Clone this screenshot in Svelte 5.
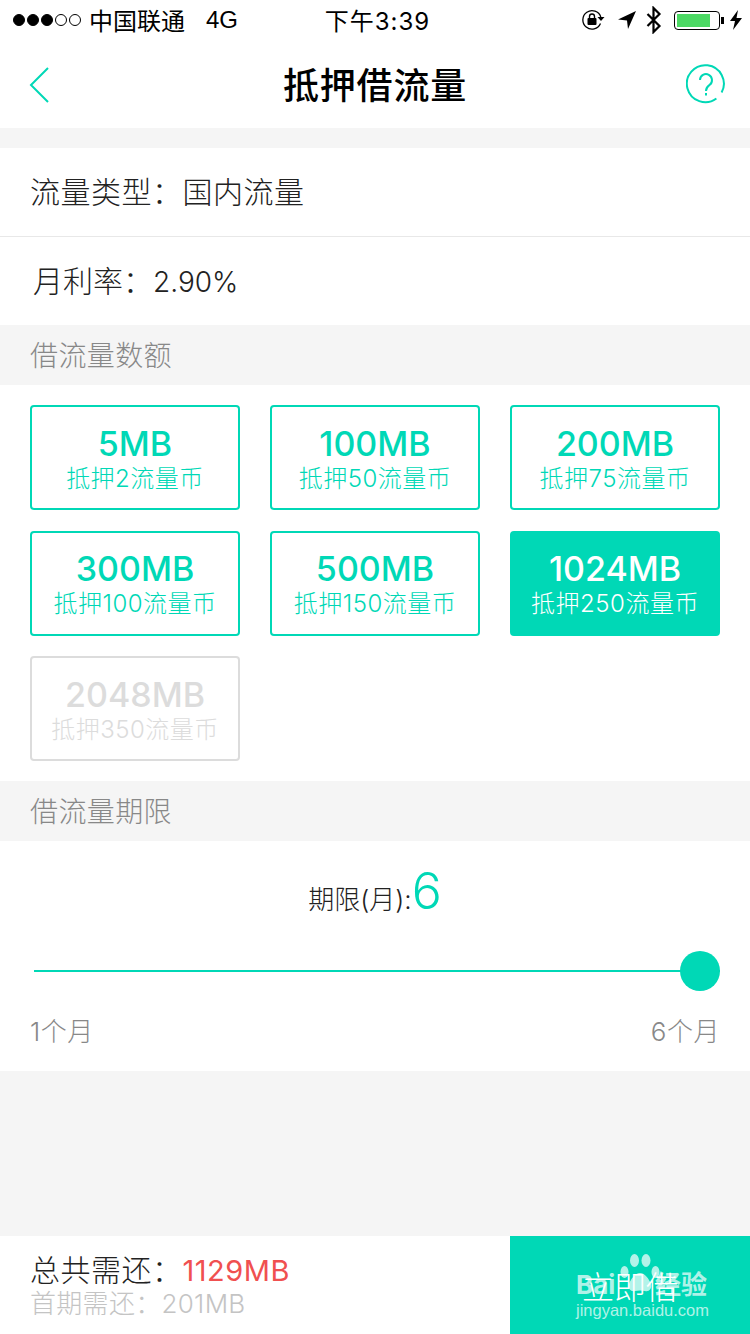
<script lang="ts">
  const options = [
    { size: '5MB', pledge: '抵押2流量币', state: '' },
    { size: '100MB', pledge: '抵押50流量币', state: '' },
    { size: '200MB', pledge: '抵押75流量币', state: '' },
    { size: '300MB', pledge: '抵押100流量币', state: '' },
    { size: '500MB', pledge: '抵押150流量币', state: '' },
    { size: '1024MB', pledge: '抵押250流量币', state: 'selected' },
    { size: '2048MB', pledge: '抵押350流量币', state: 'disabled' }
  ];
</script>

<div class="page">
  <div class="status">
    <div class="status-left">
      <span class="dots">
        <i class="on"></i><i class="on"></i><i class="on"></i><i></i><i></i>
      </span>
      <span class="carrier">中国联通</span>
      <span class="net">4G</span>
    </div>
    <div class="clock">下午3:39</div>
    <div class="status-right">
      <svg width="24" height="22" viewBox="0 0 24 22" fill="none">
        <path d="M19.500 14.500A9.200 9.200 0 1 1 19.800 8" stroke="#000" stroke-width="1.300" />
        <path d="M16.500 8h7l-3.500 4z" fill="#000" />
        <rect x="6.500" y="9" width="9" height="7" rx="1" fill="#000" />
        <path d="M8.500 9V7.500a2.500 2.500 0 0 1 5 0V9" stroke="#000" stroke-width="1.400" />
      </svg>
      <svg class="gap-arrow" width="18" height="18" viewBox="0 0 18 18">
        <path d="M18 0L0 8.500l9 1 1 8.500z" fill="#000" />
      </svg>
      <svg class="gap-bt" width="16" height="28" viewBox="0 0 16 28" fill="none">
        <path d="M1.500 8l12 12L7.500 26V2l6 6L1.500 20" stroke="#000" stroke-width="2.200" />
      </svg>
      <div class="battery"><div class="charge"></div></div>
      <div class="nub"></div>
      <svg class="gap-bolt" width="12" height="20" viewBox="0 0 12 20">
        <path d="M8 0L0 11h5l-2 9 9-12H6.500z" fill="#000" />
      </svg>
    </div>
  </div>

  <header class="nav">
    <svg class="back" width="20" height="36" viewBox="0 0 20 36" fill="none">
      <path d="M19 1L2 18l17 17" stroke="#00d8b6" stroke-width="2" />
    </svg>
    <h1>抵押借流量</h1>
    <svg class="help" width="40" height="40" viewBox="0 0 40 40" fill="none">
      <path d="M35.600 28.500A18.500 18.500 0 1 0 30.400 34.500" stroke="#00d8b6" stroke-width="2" />
      <path d="M14 16a6 6 0 1 1 9.500 5c-2 1.500-3.500 2.500-3.500 6" stroke="#00d8b6" stroke-width="2" />
      <path d="M20 29v2.500" stroke="#00d8b6" stroke-width="2" />
    </svg>
  </header>

  <div class="spacer"></div>

  <div class="row first">流量类型：国内流量</div>
  <div class="row rate-row">月利率：<span class="rate">2.90%</span></div>

  <div class="section">借流量数额</div>
  <div class="grid">
    {#each options as o}
      <div class="tile {o.state}">
        <div class="size">{o.size}</div>
        <div class="pledge">{o.pledge}</div>
      </div>
    {/each}
  </div>

  <div class="section">借流量期限</div>
  <div class="term">
    <div class="term-label">期限(月):<span class="term-value">6</span></div>
    <div class="slider">
      <div class="track"></div>
      <div class="thumb"></div>
    </div>
    <div class="ends"><span>1个月</span><span>6个月</span></div>
  </div>

  <footer class="bar">
    <div class="totals">
      <div class="total">总共需还：<span class="amount">1129MB</span></div>
      <div class="first-pay">首期需还：201MB</div>
    </div>
    <div class="submit">
      立即借
      <div class="watermark">
        <svg class="paw" width="40" height="46" viewBox="0 0 40 46" fill="#fff">
          <ellipse cx="14.500" cy="6.500" rx="4.500" ry="6.500" />
          <ellipse cx="26" cy="6.500" rx="4.500" ry="6.500" />
          <ellipse cx="4.500" cy="18" rx="4" ry="6" />
          <ellipse cx="35.500" cy="18" rx="4" ry="6" />
          <path d="M20 19c-5 0-9 6-11 11-1 5 2 8 6 7 3-.7 7-.7 10 0 4 1 7-2 6-7-2-5-6-11-11-11z" />
        </svg>
        <div class="wm-brand"><span>Bai</span><span>经验</span></div>
        <div class="wm-url">jingyan.baidu.com</div>
      </div>
    </div>
  </footer>
</div>

<style>
  :global(body) {
    margin: 0;
    background: #f5f5f5;
  }

  .page {
    width: 750px;
    height: 1334px;
    display: flex;
    flex-direction: column;
    overflow: hidden;
    background: #f5f5f5;
    font-family: 'Inter', 'Noto Sans CJK SC', sans-serif;
    font-weight: 300;
    color: #222;
  }

  .status {
    height: 40px;
    flex: none;
    display: grid;
    grid-template-columns: 1fr auto 1fr;
    align-items: center;
    padding: 0 8px 0 13px;
    box-sizing: border-box;
    background: #fff;
    color: #000;
    font-size: 24px;
    font-weight: 400;
  }
  .status-left {
    display: flex;
    align-items: center;
  }
  .dots {
    display: flex;
    gap: 2px;
    margin-right: 8px;
  }
  .dots i {
    width: 12px;
    height: 12px;
    box-sizing: border-box;
    border: 1px solid #000;
    border-radius: 50%;
  }
  .dots i.on { background: #000; }
  .carrier { padding-bottom: 2px; }
  .net {
    margin-left: 21px;
    font-family: 'Liberation Sans', sans-serif;
  }
  .clock {
    padding-bottom: 2px;
    letter-spacing: 1px;
  }
  .status-right {
    display: flex;
    align-items: center;
    justify-content: flex-end;
  }
  .gap-arrow { margin-left: 13px; }
  .gap-bt { margin-left: 10px; }
  .battery {
    width: 46px;
    height: 19px;
    margin-left: 12px;
    padding: 2px;
    box-sizing: border-box;
    border: 1px solid #000;
    border-radius: 4px;
  }
  .charge {
    width: 33px;
    height: 13px;
    background: #4cd964;
  }
  .nub {
    width: 3px;
    height: 7px;
    margin-left: 1px;
    background: #000;
  }
  .gap-bolt { margin-left: 6px; }

  .nav {
    height: 88px;
    flex: none;
    position: relative;
    display: flex;
    align-items: center;
    justify-content: center;
    background: #fff;
  }
  .nav h1 {
    margin: 0 0 2px;
    font-size: 36px;
    font-weight: 500;
    letter-spacing: 0.8px;
    color: #000;
  }
  .back {
    position: absolute;
    left: 29px;
    top: 27px;
  }
  .help {
    position: absolute;
    left: 686px;
    top: 24px;
  }

  .spacer {
    height: 20px;
    flex: none;
  }

  .row {
    height: 88px;
    flex: none;
    display: flex;
    align-items: center;
    padding: 0 0 5px 30px;
    box-sizing: border-box;
    background: #fff;
    font-size: 30px;
    letter-spacing: 0.5px;
    color: #222;
  }
  .row.first {
    height: 89px;
    border-bottom: 1px solid #e8e8e8;
  }
  .rate-row {
    padding-left: 33px;
    letter-spacing: 0;
  }
  .rate {
    margin-top: 6px;
    font-size: 28px;
  }

  .section {
    height: 60px;
    flex: none;
    display: flex;
    align-items: center;
    padding: 0 0 3px 30px;
    box-sizing: border-box;
    font-size: 28px;
    letter-spacing: 0.4px;
    color: #888;
  }

  .grid {
    flex: none;
    display: grid;
    grid-template-columns: repeat(3, 210px);
    column-gap: 30px;
    row-gap: 20.5px;
    padding: 20px 30px;
    background: #fff;
  }
  .tile {
    height: 105px;
    box-sizing: border-box;
    border: 2px solid #00d8b6;
    border-radius: 4px;
    padding-top: 5px;
    display: flex;
    flex-direction: column;
    align-items: center;
    justify-content: center;
    color: #00d8b6;
  }
  .size {
    font-size: 34px;
    font-weight: 500;
    line-height: 36px;
  }
  .pledge {
    font-size: 24px;
    line-height: 33px;
    letter-spacing: 0.5px;
  }
  .tile.selected {
    background: #00d8b6;
    color: #fff;
  }
  .tile.disabled {
    border-color: #dcdcdc;
    color: #dcdcdc;
  }

  .term {
    height: 230px;
    flex: none;
    box-sizing: border-box;
    padding: 25px 30px 0;
    background: #fff;
  }
  .term-label {
    display: flex;
    align-items: baseline;
    justify-content: center;
    font-size: 26px;
    line-height: 50px;
  }
  .term-value {
    font-size: 50px;
    color: #00d8b6;
  }
  .slider {
    position: relative;
    height: 40px;
    margin-top: 26px;
    display: flex;
    align-items: center;
  }
  .track {
    width: 100%;
    height: 2px;
    margin-left: 4px;
    background: #00d8b6;
  }
  .thumb {
    position: absolute;
    right: 0;
    top: 0;
    width: 40px;
    height: 40px;
    border-radius: 50%;
    background: #00d8b6;
  }
  .ends {
    display: flex;
    justify-content: space-between;
    margin-top: 20px;
    font-size: 26px;
    letter-spacing: 0.5px;
    color: #888;
  }

  .bar {
    height: 98px;
    margin-top: auto;
    flex: none;
    display: flex;
    background: #fff;
  }
  .totals {
    flex: 1;
    padding: 15px 0 0 30px;
  }
  .total {
    font-size: 30px;
    line-height: 38px;
    letter-spacing: 0.5px;
  }
  .amount {
    font-size: 29px;
    font-weight: 400;
    color: #f05050;
  }
  .first-pay {
    font-size: 26px;
    line-height: 28px;
    letter-spacing: 0.3px;
    color: #c4c4c4;
  }
  .submit {
    width: 240px;
    position: relative;
    display: flex;
    align-items: center;
    justify-content: center;
    background: #00d8b6;
    color: #fff;
    font-size: 32px;
  }
  .watermark {
    position: absolute;
    left: 66px;
    top: 18px;
    width: 131px;
    height: 64px;
    color: rgba(255, 255, 255, 0.7);
  }
  .paw {
    position: absolute;
    left: 44px;
    top: 0;
    opacity: 0.7;
  }
  .wm-brand {
    position: absolute;
    top: 16px;
    left: 0;
    width: 100%;
    display: flex;
    justify-content: space-between;
    font-size: 26px;
    line-height: 30px;
    font-weight: 700;
  }
  .wm-url {
    position: absolute;
    top: 46px;
    left: 0;
    font-family: 'Liberation Sans', sans-serif;
    font-size: 16.5px;
    line-height: 20px;
    white-space: nowrap;
  }
</style>
